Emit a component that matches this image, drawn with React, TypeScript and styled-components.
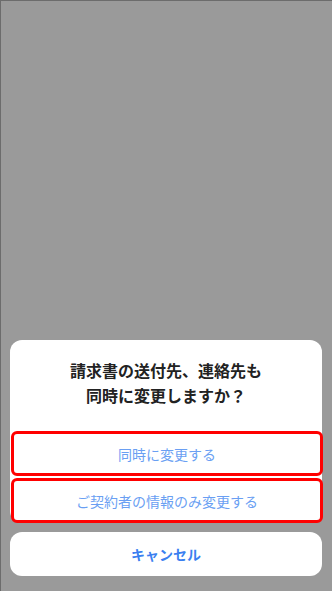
import styled, { createGlobalStyle } from 'styled-components';

const GlobalStyle = createGlobalStyle`
    html, body {
        margin: 0;
        padding: 0;
        background: #9a9a9a;
    }
    * {
        box-sizing: border-box;
    }
`

const Screen = styled.div`
    width: 332px;
    height: 591px;
    background: #9a9a9a;
    border-top: 1px solid #6c6c6c;
    border-left: 1px solid #6c6c6c;
    display: flex;
    flex-direction: column;
    justify-content: flex-end;
    padding: 0 10px 15px 9px;
    font-family: "Noto Sans CJK JP", "Noto Sans", sans-serif;
`

const Sheet = styled.div`
    background: #ffffff;
    border-radius: 12px;
    display: flex;
    flex-direction: column;
    gap: 2px;
`

const Title = styled.div`
    padding: 18px 12px 21px;
    text-align: center;
    font-size: 16px;
    line-height: 25px;
    font-weight: 700;
    color: #222222;
`

const Action = styled.button<{ $highlight?: boolean }>`
    height: 45px;
    margin: 0 -1px 0 1px;
    background: #ffffff;
    border: ${p => (p.$highlight ? '3px solid #ff0000' : 'none')};
    border-radius: 6px;
    font-family: inherit;
    font-size: 14px;
    color: #6a9ff3;
    cursor: pointer;
`

const CancelButton = styled.button`
    margin-top: 9px;
    height: 44px;
    background: #ffffff;
    border: none;
    border-radius: 12px;
    font-family: inherit;
    font-size: 14px;
    font-weight: 700;
    color: #3b7ff0;
    cursor: pointer;
`

const App = () => {
    return (
        <>
            <GlobalStyle />
            <Screen>
                <Sheet>
                    <Title>
                        請求書の送付先、連絡先も
                        <br />
                        同時に変更しますか？
                    </Title>
                    <Action $highlight>同時に変更する</Action>
                    <Action $highlight>ご契約者の情報のみ変更する</Action>
                </Sheet>
                <CancelButton>キャンセル</CancelButton>
            </Screen>
        </>
    )
}

export default App
